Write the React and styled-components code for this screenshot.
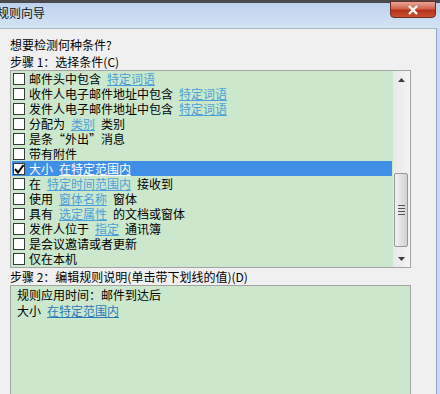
import React from 'react';
import styled, { createGlobalStyle } from 'styled-components';

const GlobalStyle = createGlobalStyle`
  html, body {
    margin: 0;
    padding: 0;
    background: #f0f0f0;
  }
  body {
    width: 440px;
    height: 394px;
    overflow: hidden;
    font-family: "Noto Sans CJK SC", "Noto Sans", sans-serif;
    font-size: 12px;
    color: #000;
  }
`;

const Window = styled.div`
  width: 440px;
  height: 394px;
  display: flex;
  flex-direction: column;
  background: #c9dbee;
  overflow: hidden;
`;

const TitleBar = styled.div`
  height: 28px;
  flex: none;
  display: flex;
  align-items: flex-start;
  justify-content: space-between;
  background: linear-gradient(to bottom, #4a4a4a 0, #4a4a4a 3px, #bcd3ec 3px, #d3e3f4 28px);
`;

const Title = styled.span`
  margin: 5px 0 0 -3px;
  line-height: 16px;
  font-size: 12px;
  color: #111;
`;

const CloseButton = styled.div`
  width: 46px;
  height: 17px;
  margin: 1px 4px 0 0;
  box-sizing: border-box;
  border: 1px solid #6e2a1e;
  border-radius: 0 0 4px 4px;
  background: linear-gradient(to bottom, #e6a799 0, #d2634c 45%, #b8321a 55%, #c9502f 100%);
  display: flex;
  align-items: center;
  justify-content: center;
`;

const Body = styled.div`
  flex: 1;
  margin-right: 3px;
  padding: 7px 0 0 10px;
  background: #f0f0f0;
  border-top: 1px solid #a6b7ca;
  border-right: 1px solid #8ea8c6;
  display: flex;
  flex-direction: column;
  min-height: 0;
`;

const Label = styled.div`
  line-height: 17px;
  height: 17px;
  white-space: nowrap;
`;

const ListBox = styled.div`
  width: 401px;
  height: 198px;
  flex: none;
  box-sizing: border-box;
  border: 1px solid #a3a3a3;
  background: #cbe8cd;
  display: flex;
`;

const Rows = styled.div`
  flex: 1;
  display: flex;
  flex-direction: column;
`;

const Row = styled.div`
  height: 15px;
  display: flex;
  align-items: center;
  padding-left: ${p => (p.$selected ? 1 : 2)}px;
  margin: 0 ${p => (p.$selected ? 1 : 0)}px;
  background: ${p => (p.$selected ? '#3f8fe7' : 'transparent')};
  color: ${p => (p.$selected ? '#fff' : '#000')};
  white-space: nowrap;
`;

const CheckBox = styled.span`
  width: 12px;
  height: 12px;
  flex: none;
  box-sizing: border-box;
  border: 1px solid #3a3a3a;
  background: #fff;
  margin-right: 4px;
  display: flex;
  align-items: center;
  justify-content: center;
`;

const RowText = styled.span`
  display: flex;
  column-gap: 6px;
  line-height: 15px;
`;

const Link = styled.span`
  text-decoration: underline;
  text-underline-offset: 1px;
  color: ${p => p.$color};
`;

const ScrollBar = styled.div`
  width: 17px;
  flex: none;
  display: flex;
  flex-direction: column;
  background: linear-gradient(to right, #e8e8e8, #f4f4f4);
`;

const ArrowButton = styled.div`
  height: 17px;
  flex: none;
  display: flex;
  align-items: center;
  justify-content: center;
`;

const TrackGap = styled.div`
  height: ${p => p.$h}px;
  flex: ${p => (p.$h ? 'none' : 1)};
`;

const Thumb = styled.div`
  height: 74px;
  flex: none;
  margin: 0 2px 0 1px;
  box-sizing: border-box;
  border: 1px solid #979797;
  border-radius: 2px;
  background: linear-gradient(to right, #f2f2f2, #e2e2e2 50%, #d2d2d2);
  display: flex;
  flex-direction: column;
  align-items: center;
  justify-content: center;
  gap: 2px;
`;

const Grip = styled.span`
  width: 7px;
  height: 1px;
  background: #555;
`;

const DescBox = styled.div`
  width: 401px;
  flex: 1;
  box-sizing: border-box;
  border: 1px solid #a3a3a3;
  border-bottom: none;
  background: #cbe8cd;
  padding: 1px 6px;
`;

const DescLine = styled.div`
  line-height: 16px;
  display: flex;
  column-gap: 6px;
`;

const Arrow = ({ down }) => (
  <svg width="7" height="4" viewBox="0 0 7 4">
    <polygon points={down ? '0,0 7,0 3.5,4' : '0,4 7,4 3.5,0'} fill="#3c3c3c" />
  </svg>
);

const Check = () => (
  <svg width="10" height="10" viewBox="0 0 10 10">
    <path d="M1 5 L4 8.5 L9.5 1" fill="none" stroke="#000" strokeWidth="2" />
  </svg>
);

const rows = [
  [['邮件头中包含'], ['特定词语', true]],
  [['收件人电子邮件地址中包含'], ['特定词语', true]],
  [['发件人电子邮件地址中包含'], ['特定词语', true]],
  [['分配为'], ['类别', true], ['类别']],
  [['是条“外出”消息']],
  [['带有附件']],
  [['大小'], ['在特定范围内', true]],
  [['在'], ['特定时间范围内', true], ['接收到']],
  [['使用'], ['窗体名称', true], ['窗体']],
  [['具有'], ['选定属性', true], ['的文档或窗体']],
  [['发件人位于'], ['指定', true], ['通讯簿']],
  [['是会议邀请或者更新']],
  [['仅在本机']],
];

const SELECTED = 6;

export default function App() {
  return (
    <>
      <GlobalStyle />
      <Window>
        <TitleBar>
          <Title>规则向导</Title>
          <CloseButton>
            <svg width="12" height="10" viewBox="0 0 12 10">
              <path d="M2 1 L10 9 M10 1 L2 9" stroke="#fff" strokeWidth="2.4" />
            </svg>
          </CloseButton>
        </TitleBar>
        <Body>
          <Label>想要检测何种条件?</Label>
          <Label>步骤 1：选择条件(C)</Label>
          <ListBox>
            <Rows>
              {rows.map((parts, i) => {
                const selected = i === SELECTED;
                return (
                  <Row key={i} $selected={selected}>
                    <CheckBox>{selected && <Check />}</CheckBox>
                    <RowText>
                      {parts.map(([text, link], j) =>
                        link ? (
                          <Link key={j} $color={selected ? '#fff' : '#4b9fd8'}>{text}</Link>
                        ) : (
                          <span key={j}>{text}</span>
                        )
                      )}
                    </RowText>
                  </Row>
                );
              })}
            </Rows>
            <ScrollBar>
              <ArrowButton><Arrow /></ArrowButton>
              <TrackGap $h={85} />
              <Thumb>
                <Grip />
                <Grip />
                <Grip />
                <Grip />
              </Thumb>
              <TrackGap />
              <ArrowButton><Arrow down /></ArrowButton>
            </ScrollBar>
          </ListBox>
          <Label>步骤 2：编辑规则说明(单击带下划线的值)(D)</Label>
          <DescBox>
            <DescLine>规则应用时间：邮件到达后</DescLine>
            <DescLine>
              <span>大小</span>
              <Link $color="#2c78b9">在特定范围内</Link>
            </DescLine>
          </DescBox>
        </Body>
      </Window>
    </>
  );
}
